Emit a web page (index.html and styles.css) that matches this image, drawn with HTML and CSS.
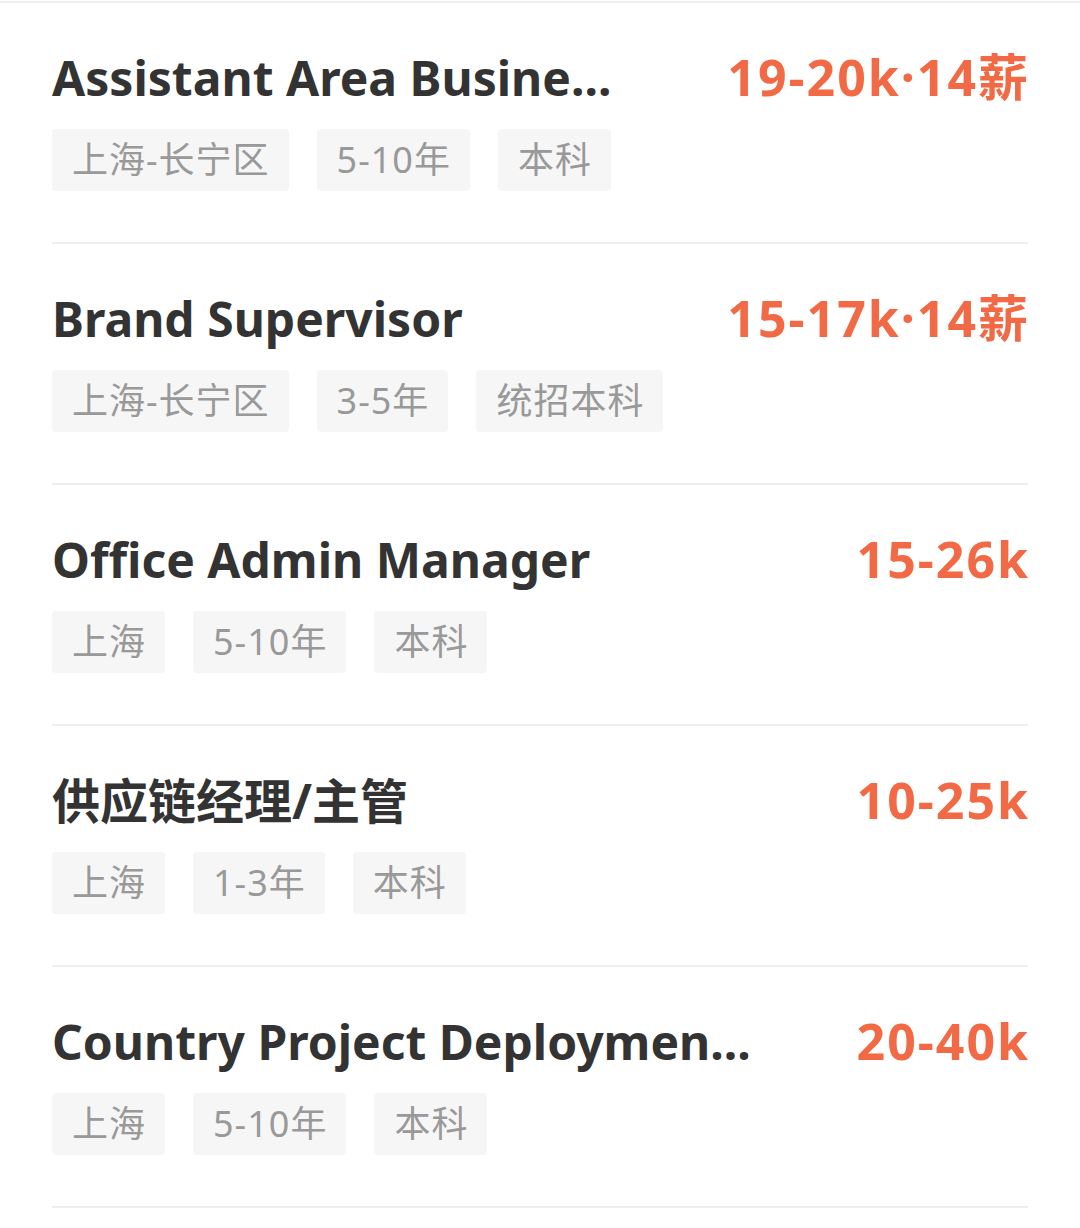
FILE: index.html
```html
<!DOCTYPE html>
<html lang="zh-CN">
<head>
    <meta charset="UTF-8">
    <meta name="viewport" content="width=device-width, initial-scale=1.0">
    <title>职位列表</title>
    <link rel="stylesheet" href="styles.css">
</head>
<body>
    <ul class="job-list">
        <li class="job">
            <div class="job-head">
                <h3 class="job-title">Assistant Area Busine...</h3>
                <span class="job-salary">19-20k·14薪</span>
            </div>
            <div class="job-tags">
                <span class="tag">上海-长宁区</span>
                <span class="tag">5-10年</span>
                <span class="tag">本科</span>
            </div>
        </li>
        <li class="job">
            <div class="job-head">
                <h3 class="job-title">Brand Supervisor</h3>
                <span class="job-salary">15-17k·14薪</span>
            </div>
            <div class="job-tags">
                <span class="tag">上海-长宁区</span>
                <span class="tag">3-5年</span>
                <span class="tag">统招本科</span>
            </div>
        </li>
        <li class="job">
            <div class="job-head">
                <h3 class="job-title">Office Admin Manager</h3>
                <span class="job-salary">15-26k</span>
            </div>
            <div class="job-tags">
                <span class="tag">上海</span>
                <span class="tag">5-10年</span>
                <span class="tag">本科</span>
            </div>
        </li>
        <li class="job">
            <div class="job-head">
                <h3 class="job-title">供应链经理/主管</h3>
                <span class="job-salary">10-25k</span>
            </div>
            <div class="job-tags">
                <span class="tag">上海</span>
                <span class="tag">1-3年</span>
                <span class="tag">本科</span>
            </div>
        </li>
        <li class="job">
            <div class="job-head">
                <h3 class="job-title">Country Project Deploymen...</h3>
                <span class="job-salary">20-40k</span>
            </div>
            <div class="job-tags">
                <span class="tag">上海</span>
                <span class="tag">5-10年</span>
                <span class="tag">本科</span>
            </div>
        </li>
    </ul>
</body>
</html>
```

FILE: styles.css
```css
body {
    margin: 0;
    background: #fff;
    font-family: "Noto Sans", "Noto Sans CJK SC", sans-serif;
}

.job-list {
    list-style: none;
    margin: 1px 0 0;
    padding: 0;
    border-top: 2px solid #eeeeee;
}

.job {
    margin: 0 52px;
    padding: 44px 0 51px;
    border-bottom: 2px solid #eeeeee;
}

.job-head {
    display: flex;
    justify-content: space-between;
    align-items: baseline;
    line-height: 60px;
}

.job-title {
    margin: 0;
    padding-right: 40px;
    font-size: 48px;
    font-weight: bold;
    color: #333;
    white-space: nowrap;
}

.job-salary {
    flex-shrink: 0;
    font-size: 50px;
    font-weight: bold;
    letter-spacing: 2px;
    margin-right: -2px;
    color: #f26a45;
}

.job-tags {
    display: flex;
    gap: 28px;
    margin-top: 21px;
}

.tag {
    padding: 0 19px 0 20px;
    line-height: 62px;
    font-size: 36px;
    letter-spacing: 1px;
    color: #999;
    background: #f6f6f6;
    border-radius: 4px;
}
```
